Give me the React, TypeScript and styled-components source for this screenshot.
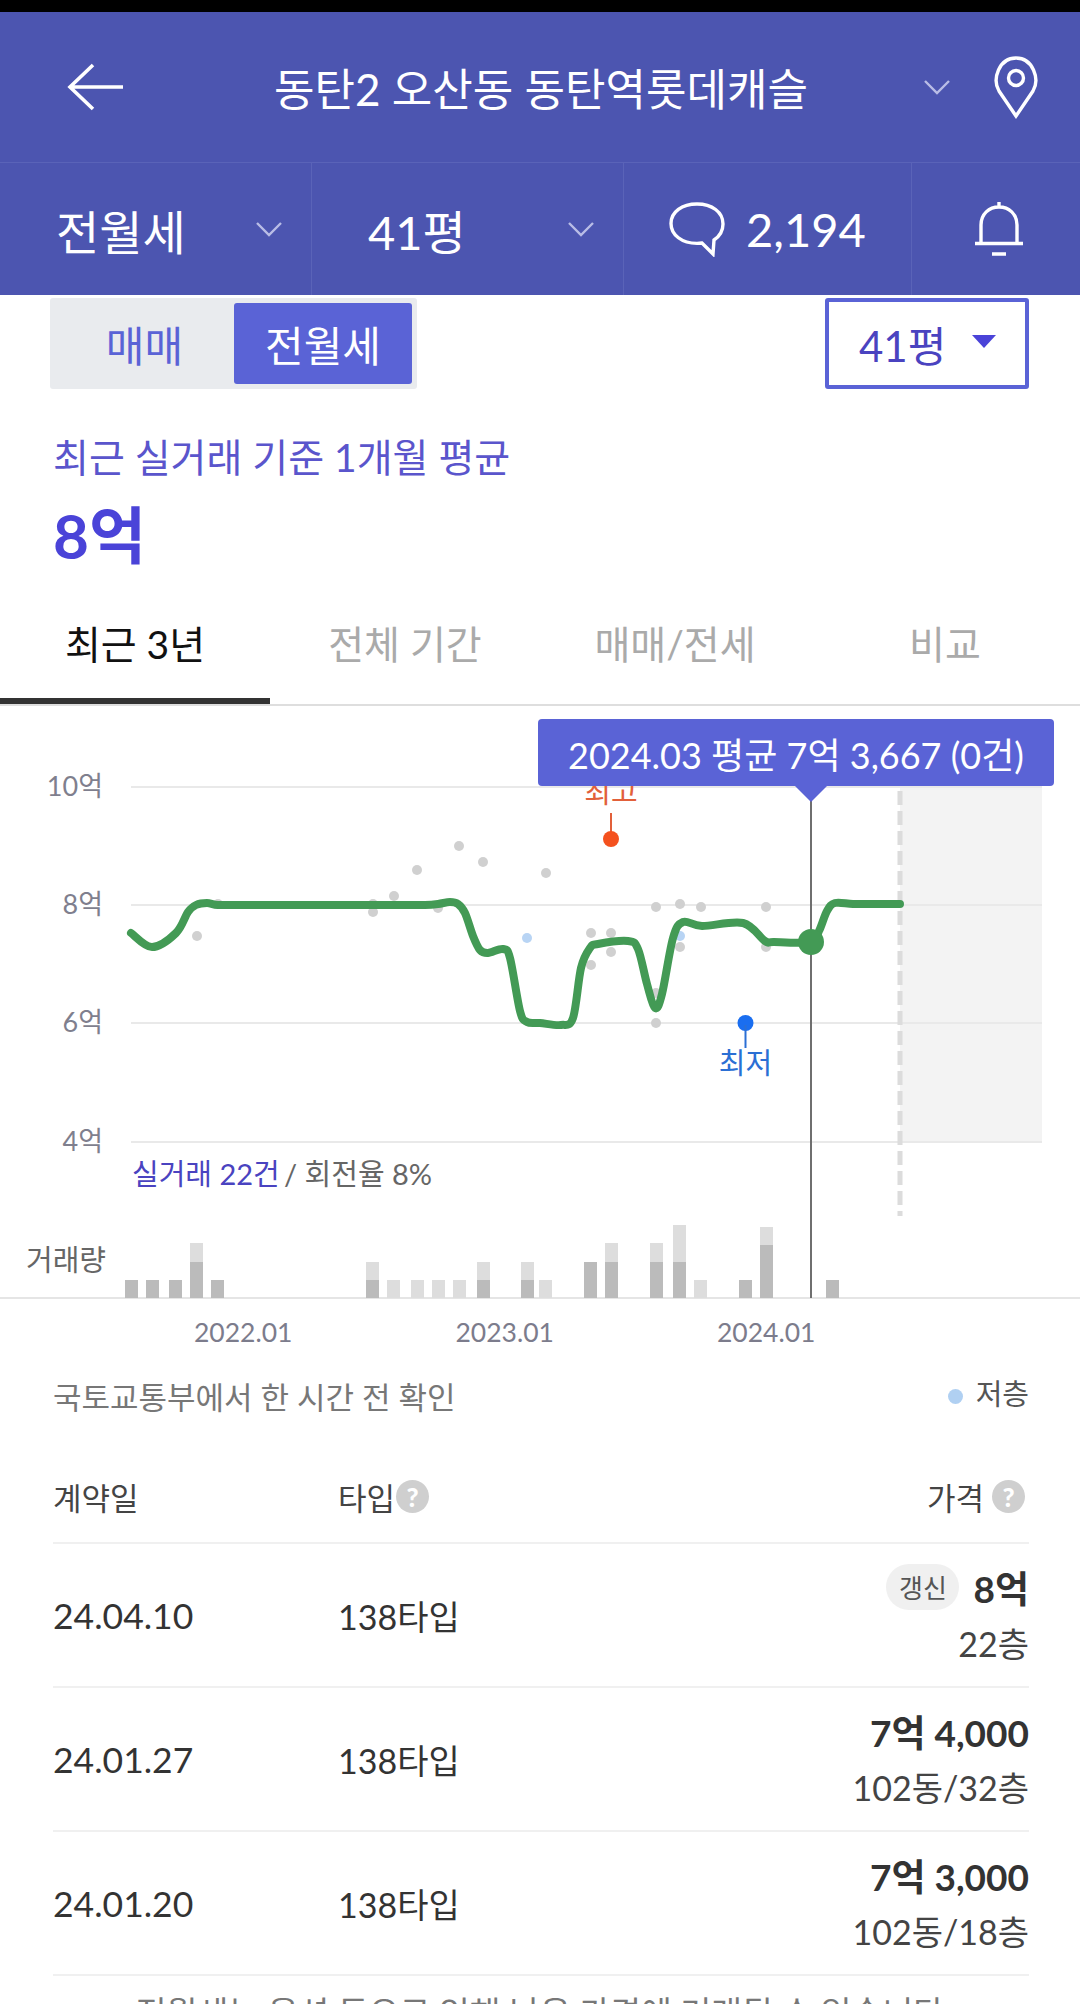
import React from 'react';
import styled, { createGlobalStyle } from 'styled-components';

const GlobalStyle = createGlobalStyle`
  html, body {
    margin: 0;
    padding: 0;
    background: #fff;
  }
  body {
    font-family: Lato, "Noto Sans CJK KR", sans-serif;
    color: #333;
  }
`;

// Chart data, in page pixels (the svg viewBox starts at the chart's top)
const TREND: [number, number][] = [
  [131, 932], [152, 946], [176, 932], [188, 911], [196, 904], [207, 902], [218, 904], [240, 904],
  [280, 904], [340, 904], [400, 904], [425, 904], [438, 903], [450, 901], [458, 903], [465, 912],
  [473, 935], [480, 949], [488, 952], [503, 948], [510, 957], [520, 1010], [527, 1021], [540, 1022],
  [561, 1024], [573, 1017], [581, 967], [590, 947], [598, 943], [628, 940], [638, 948], [647, 983],
  [655, 1007], [662, 993], [673, 937], [683, 921], [702, 925], [743, 922], [765, 940], [774, 941],
  [811, 941], [819, 930], [827, 910], [835, 902], [853, 903], [875, 903], [900, 903],
];

const GREY_DOTS: [number, number][] = [
  [197, 935], [373, 911], [373, 903], [394, 895], [417, 869], [459, 845], [483, 861], [438, 907],
  [218, 903], [546, 872], [591, 932], [611, 932], [611, 951], [591, 964], [656, 906], [680, 903],
  [701, 906], [766, 906], [680, 946], [766, 946], [656, 1022], [656, 992],
];

const BLUE_DOTS: [number, number][] = [[527, 937], [680, 935]];

// x, dark height, light height on top of it
const BARS: [number, number, number][] = [
  [125, 18, 0], [146, 18, 0], [169, 18, 0], [190, 36, 19], [211, 18, 0],
  [366, 18, 18], [387, 0, 18], [411, 0, 18], [432, 0, 18], [453, 0, 18], [477, 18, 18],
  [521, 18, 18], [539, 0, 18], [584, 36, 0], [605, 36, 19], [650, 36, 19], [673, 36, 37],
  [694, 0, 18], [739, 18, 0], [760, 53, 18], [826, 18, 0],
];

const GRID_LINES = [
  { y: 786, label: '10억' },
  { y: 904, label: '8억' },
  { y: 1022, label: '6억' },
  { y: 1141, label: '4억' },
];

const DEALS = [
  { date: '24.04.10', type: '138타입', price: '8억', floor: '22층', renewed: true },
  { date: '24.01.27', type: '138타입', price: '7억 4,000', floor: '102동/32층', renewed: false },
  { date: '24.01.20', type: '138타입', price: '7억 3,000', floor: '102동/18층', renewed: false },
];

// Catmull-Rom through the points, to get the chart's soft curve
const smoothPath = (pts: [number, number][]) => {
  let d = `M${pts[0][0]} ${pts[0][1]}`;
  for (let i = 0; i < pts.length - 1; i++) {
    const p0 = pts[Math.max(i - 1, 0)];
    const p1 = pts[i];
    const p2 = pts[i + 1];
    const p3 = pts[Math.min(i + 2, pts.length - 1)];
    const c1x = p1[0] + (p2[0] - p0[0]) / 6;
    const c1y = p1[1] + (p2[1] - p0[1]) / 6;
    const c2x = p2[0] - (p3[0] - p1[0]) / 6;
    const c2y = p2[1] - (p3[1] - p1[1]) / 6;
    d += ` C${c1x.toFixed(1)} ${c1y.toFixed(1)} ${c2x.toFixed(1)} ${c2y.toFixed(1)} ${p2[0]} ${p2[1]}`;
  }
  return d;
};

const Chevron = () => (
  <ChevronIcon width="28" height="16" viewBox="0 0 28 16" fill="none" stroke="#b9bde6" strokeWidth="2.4">
    <path d="M2 2l12 12L26 2" />
  </ChevronIcon>
);

const HelpMark = () => <Help>?</Help>;

const App: React.FC = () => {
  return (
    <Page>
      <GlobalStyle />
      <StatusBar />
      <TitleBar>
        <svg width="56" height="48" viewBox="0 0 56 48" fill="none" stroke="#fff" strokeWidth="3.6">
          <path d="M26 2L3 24l23 22M3 24h53" />
        </svg>
        <Title>동탄2 오산동 동탄역롯데캐슬</Title>
        <Chevron />
        <svg width="46" height="64" viewBox="0 0 46 64" fill="none" stroke="#fff" strokeWidth="3.4">
          <path d="M23 61L6 36C-1 24 6 3 23 3s24 21 17 33z" />
          <circle cx="23" cy="23" r="7.5" />
        </svg>
      </TitleBar>
      <SubBar>
        <SubCell $width={312}>
          <SubLabel>전월세</SubLabel>
          <Chevron />
        </SubCell>
        <SubCell $width={312}>
          <SubLabel>41평</SubLabel>
          <Chevron />
        </SubCell>
        <CommentCell>
          <svg width="58" height="56" viewBox="0 0 58 56" fill="none" stroke="#fff" strokeWidth="3.4">
            <path d="M29 3c15 0 26 8 26 20 0 7-3 12-9 16l-1 14-11-11c-2 .3-3 .4-5 .4C14 42.400 3 34 3 22.500 3 11 14 3 29 3z" />
          </svg>
          <CommentCount>2,194</CommentCount>
        </CommentCell>
        <BellCell>
          <svg width="50" height="56" viewBox="0 0 50 56" fill="none" stroke="#fff" strokeWidth="3.4">
            <path d="M7 42V24C7 13 15 6 25 6s18 7 18 18v18M1 42.500h48M18 53h14M25 1v5" />
          </svg>
        </BellCell>
      </SubBar>

      <SelectorRow>
        <Toggle>
          <ToggleItem>매매</ToggleItem>
          <ToggleItem $active>전월세</ToggleItem>
        </Toggle>
        <SizeSelect>
          41평
          <Caret />
        </SizeSelect>
      </SelectorRow>

      <Summary>
        <SummaryLabel>최근 실거래 기준 1개월 평균</SummaryLabel>
        <SummaryPrice>8억</SummaryPrice>
      </Summary>

      <Tabs>
        <Tab $active>최근 3년</Tab>
        <Tab>전체 기간</Tab>
        <Tab>매매/전세</Tab>
        <Tab>비교</Tab>
      </Tabs>

      <ChartWrap>
        <ChartSvg width="1080" height="594" viewBox="0 705 1080 594">
          <rect x="900" y="786" width="142" height="355" fill="#f3f3f3" />
          {GRID_LINES.map(line => (
            <g key={line.y}>
              <line x1="131" x2="1042" y1={line.y} y2={line.y} stroke="#e9e9e9" strokeWidth="2" />
              <text x="103" y={line.y + 9} textAnchor="end" fontSize="27" fill="#7f7f8e">{line.label}</text>
            </g>
          ))}
          <line x1="900" x2="900" y1="790" y2="1215" stroke="#dcdcdc" strokeWidth="5" strokeDasharray="14 6" />

          {GREY_DOTS.map(([x, y]) => <circle key={`${x}-${y}`} cx={x} cy={y} r="5" fill="#d0d0d0" />)}
          {BLUE_DOTS.map(([x, y]) => <circle key={`${x}-${y}`} cx={x} cy={y} r="5" fill="#b8d4f4" />)}

          <text x="611" y="802" textAnchor="middle" fontSize="29" fill="#e2603a">최고</text>
          <line x1="611" x2="611" y1="812" y2="832" stroke="#e2603a" strokeWidth="2" />
          <circle cx="611" cy="838" r="8" fill="#f4511e" />

          <circle cx="745.500" cy="1022" r="8" fill="#1a6ef0" />
          <line x1="745.500" x2="745.500" y1="1024" y2="1047" stroke="#2b6fd4" strokeWidth="2" />
          <text x="745.500" y="1073" textAnchor="middle" fontSize="29" fill="#2b6fd4">최저</text>

          <line x1="811" x2="811" y1="790" y2="1297" stroke="#6f6f6f" strokeWidth="2" />
          <path d={smoothPath(TREND)} fill="none" stroke="#439a55" strokeWidth="8" strokeLinecap="round" strokeLinejoin="round" />
          <circle cx="811" cy="941" r="13" fill="#439a55" />

          <text x="132" y="1184" fontSize="29" fill="#4a43c0">실거래 22건</text>
          <text x="284" y="1184" fontSize="29" fill="#666">/ 회전율 8%</text>
          <text x="26" y="1270" fontSize="29" fill="#666">거래량</text>

          {BARS.map(([x, dark, light]) => (
            <g key={x}>
              {light > 0 && <rect x={x} y={1297 - dark - light} width="13" height={light} fill="#dddddd" />}
              {dark > 0 && <rect x={x} y={1297 - dark} width="13" height={dark} fill="#bbbbbb" />}
            </g>
          ))}
        </ChartSvg>
        <Tooltip>2024.03 평균 7억 3,667 (0건)</Tooltip>
      </ChartWrap>

      <XAxis>
        <span>2022.01</span>
        <span>2023.01</span>
        <span>2024.01</span>
      </XAxis>

      <NoteRow>
        <NoteText>국토교통부에서 한 시간 전 확인</NoteText>
        <Legend>저층</Legend>
      </NoteRow>

      <DealTable>
        <HeadRow>
          <HeadDate>계약일</HeadDate>
          <TypeCol>타입<HelpMark /></TypeCol>
          <PriceHead>가격<HelpMark /></PriceHead>
        </HeadRow>
        {DEALS.map(deal => (
          <DealRow key={deal.date}>
            <DateCol>{deal.date}</DateCol>
            <TypeCol>{deal.type}</TypeCol>
            <PriceCol>
              <PriceLine>
                {deal.renewed && <Badge>갱신</Badge>}
                <Price>{deal.price}</Price>
              </PriceLine>
              <Floor>{deal.floor}</Floor>
            </PriceCol>
          </DealRow>
        ))}
      </DealTable>
      <Disclaimer>전월세는 옵션 등으로 인해 낮은 가격에 거래될 수 있습니다</Disclaimer>
    </Page>
  );
};

export default App;

//#region styled-components
const Page = styled.div`
  width: 1080px;
  height: 2004px;
  overflow: hidden;
  background: #fff;
`;

const StatusBar = styled.div`
  height: 12px;
  background: #000;
`;

const TitleBar = styled.header`
  height: 150px;
  display: flex;
  align-items: center;
  padding: 0 41px 0 67px;
  background: #4c55b0;
  border-bottom: 1px solid #5a63b8;
`;

const Title = styled.h1`
  flex: 1;
  margin: 0;
  padding-left: 36px;
  text-align: center;
  font-size: 44px;
  font-weight: 400;
  color: #fff;
`;

const ChevronIcon = styled.svg`
  flex: none;
  margin-right: 42px;
`;

const SubBar = styled.div`
  height: 132px;
  display: flex;
  background: #4c55b0;
`;

const SubCell = styled.div<{ $width: number }>`
  width: ${p => p.$width}px;
  box-sizing: border-box;
  display: flex;
  align-items: center;
  justify-content: space-between;
  padding-left: 56px;
  border-right: 1px solid #5a63b8;
  svg {
    margin-right: 28px;
  }
`;

const SubLabel = styled.span`
  font-size: 47px;
  color: #fff;
`;

const CommentCell = styled.div`
  width: 288px;
  box-sizing: border-box;
  display: flex;
  align-items: center;
  padding-left: 44px;
  gap: 20px;
  border-right: 1px solid #5a63b8;
`;

const CommentCount = styled.span`
  font-size: 47px;
  color: #fff;
`;

const BellCell = styled.div`
  flex: 1;
  display: flex;
  align-items: center;
  justify-content: center;
  padding-left: 5px;
`;

const SelectorRow = styled.div`
  height: 91px;
  margin-top: 3px;
  padding: 0 51px 0 50px;
  display: flex;
  justify-content: space-between;
`;

const Toggle = styled.div`
  width: 367px;
  box-sizing: border-box;
  display: flex;
  padding: 5px;
  background: #e9ebee;
  border-radius: 3px;
`;

const ToggleItem = styled.div<{ $active?: boolean }>`
  flex: ${p => (p.$active ? '0 0 178px' : '1')};
  display: flex;
  align-items: center;
  justify-content: center;
  font-size: 42px;
  border-radius: 3px;
  color: ${p => (p.$active ? '#fff' : '#5a63d6')};
  background: ${p => (p.$active ? '#5a63d6' : 'transparent')};
`;

const SizeSelect = styled.div`
  width: 204px;
  box-sizing: border-box;
  display: flex;
  align-items: center;
  gap: 26px;
  padding-left: 30px;
  border: 4px solid #5a63d6;
  border-radius: 3px;
  font-size: 42px;
  color: #4a43c0;
`;

const Caret = styled.span`
  width: 0;
  height: 0;
  margin-bottom: 4px;
  border-left: 12px solid transparent;
  border-right: 12px solid transparent;
  border-top: 13px solid #4a43d8;
`;

const Summary = styled.div`
  padding: 41px 53px 0;
`;

const SummaryLabel = styled.div`
  font-size: 39px;
  line-height: 54px;
  color: #5a55cc;
`;

const SummaryPrice = styled.div`
  margin-top: 13px;
  font-size: 62px;
  line-height: 76px;
  font-weight: 700;
  color: #4a43d8;
`;

const Tabs = styled.nav`
  height: 105px;
  display: flex;
  margin-top: 26px;
  border-bottom: 2px solid #dedede;
`;

const Tab = styled.div<{ $active?: boolean }>`
  flex: 1;
  box-sizing: border-box;
  display: flex;
  align-items: center;
  justify-content: center;
  height: 105px;
  padding-bottom: 14px;
  font-size: 39px;
  color: ${p => (p.$active ? '#111' : '#aaa')};
  border-bottom: ${p => (p.$active ? '6px solid #333' : '6px solid transparent')};
`;

const ChartWrap = styled.div`
  position: relative;
  height: 591px;
`;

const ChartSvg = styled.svg`
  display: block;
  font-family: Lato, "Noto Sans CJK KR", sans-serif;
`;

const Tooltip = styled.div`
  position: absolute;
  left: 538px;
  top: 13px;
  width: 516px;
  height: 67px;
  display: flex;
  align-items: center;
  justify-content: center;
  background: #5a63d6;
  border-radius: 4px;
  font-size: 36px;
  color: #fff;

  &::after {
    content: '';
    position: absolute;
    left: 257px;
    top: 67px;
    border-left: 16px solid transparent;
    border-right: 16px solid transparent;
    border-top: 16px solid #5a63d6;
  }
`;

const XAxis = styled.div`
  display: flex;
  gap: 163px;
  padding: 17px 0 0 194px;
  border-top: 2px solid #e5e5e5;
  font-size: 26.5px;
  line-height: 32px;
  color: #7c7c8c;
`;

const NoteRow = styled.div`
  display: flex;
  justify-content: space-between;
  padding: 27px 51px 0 53px;
  height: 56px;
`;

const NoteText = styled.div`
  font-size: 31px;
  line-height: 44px;
  color: #777;
`;

const Legend = styled.div`
  display: flex;
  align-items: center;
  gap: 13px;
  height: 34px;
  font-size: 29px;
  color: #555;

  &::before {
    content: '';
    width: 15px;
    height: 15px;
    margin-top: 8px;
    border-radius: 50%;
    background: #b0d0f2;
  }
`;

const DealTable = styled.div`
  margin: 0 51px 0 53px;
`;

const HeadRow = styled.div`
  height: 91px;
  margin-top: 20px;
  display: flex;
  align-items: center;
  border-bottom: 2px solid #f0f0f0;
  font-size: 31px;
  color: #444;
`;

const DealRow = styled.div`
  box-sizing: border-box;
  height: 144px;
  display: flex;
  align-items: center;
  border-bottom: 2px solid #f0f0f0;
  font-size: 34px;
  color: #333;
`;

const HeadDate = styled.div`
  width: 285px;
`;

const DateCol = styled.div`
  width: 285px;
  font-size: 35.5px;
`;

const TypeCol = styled.div`
  flex: 1;
  display: flex;
  align-items: center;
  gap: 1px;
`;

const PriceHead = styled.div`
  display: flex;
  align-items: center;
  gap: 8px;
  padding-right: 4px;
`;

const PriceCol = styled.div`
  display: flex;
  flex-direction: column;
  align-items: flex-end;
  gap: 8px;
`;

const PriceLine = styled.div`
  display: flex;
  align-items: center;
  gap: 14px;
  height: 46px;
`;

const Price = styled.span`
  font-size: 37px;
  font-weight: 700;
`;

const Floor = styled.span`
  font-size: 34px;
  color: #444;
`;

const Badge = styled.span`
  width: 73px;
  height: 46px;
  display: flex;
  align-items: center;
  justify-content: center;
  border-radius: 23px;
  background: #f0f0f0;
  font-size: 26px;
  color: #555;
`;

const Help = styled.span`
  width: 33px;
  height: 33px;
  display: inline-flex;
  align-items: center;
  justify-content: center;
  border-radius: 50%;
  background: #cfcfcf;
  font-size: 26px;
  font-weight: 900;
  color: #fff;
`;

const Disclaimer = styled.div`
  margin-top: 16px;
  text-align: center;
  font-size: 33.5px;
  line-height: 40px;
  color: #777;
`;
//#endregion
